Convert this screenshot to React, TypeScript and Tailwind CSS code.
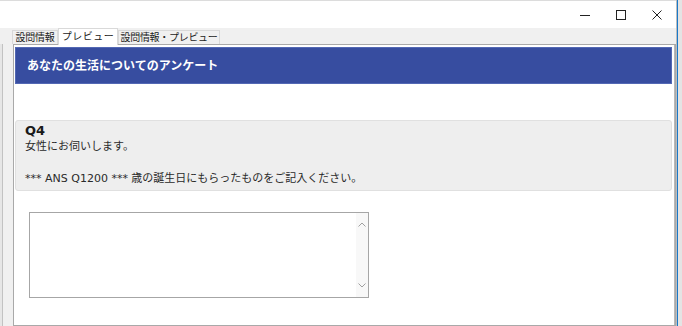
import React from 'react';

const jp = '"DejaVu Sans", "Noto Sans CJK JP", sans-serif';

function WindowControls() {
  return (
    <div className="flex h-full items-center mr-px">
      <div className="w-[36px] h-full flex items-center justify-center">
        <svg width="10" height="10" viewBox="0 0 10 10">
          <path d="M0 5.5 H10" stroke="#222" strokeWidth="1" />
        </svg>
      </div>
      <div className="w-[36px] h-full flex items-center justify-center">
        <svg width="10" height="10" viewBox="0 0 10 10">
          <rect x="0.5" y="0.5" width="9" height="9" fill="none" stroke="#222" strokeWidth="1" />
        </svg>
      </div>
      <div className="w-[36px] h-full flex items-center justify-center">
        <svg width="10" height="10" viewBox="0 0 10 10">
          <path d="M0.5 0.5 L9.5 9.5 M9.5 0.5 L0.5 9.5" stroke="#222" strokeWidth="1" />
        </svg>
      </div>
    </div>
  );
}

const tabs = [
  { name: '設問情報', w: 'w-[46px]', active: false },
  { name: 'プレビュー', w: 'w-[60px]', active: true },
  { name: '設問情報・プレビュー', w: 'w-[102px]', active: false },
];

export default function App() {
  return (
    <div
      className="w-[682px] h-[326px] flex bg-[#f0f0f0] overflow-hidden text-[#222]"
      style={{ fontFamily: jp }}
    >
      {/* Main window */}
      <div className="w-[677px] flex flex-col border-r border-[#bdbdbd]">
        {/* Title bar */}
        <div className="h-[28px] bg-white border-t border-[#dcdcdc] flex justify-end shrink-0">
          <WindowControls />
        </div>

        <div className="flex-1 flex min-h-0">
          {/* Left strip */}
          <div className="w-[12px] flex flex-col">
            <div className="h-[16px]" />
            <div className="flex-1 flex">
              <div className="w-[2px] bg-[#e6e6e6]" />
              <div className="w-px bg-[#c2c2c2]" />
              <div className="flex-1 bg-[#f0f0f0]" />
            </div>
          </div>

          {/* Tab control */}
          <div className="flex-1 flex flex-col min-w-0">
            <div className="h-[16px] flex items-end shrink-0">
              {tabs.map((t) =>
                t.active ? (
                  <div
                    key={t.name}
                    className={`${t.w} h-[17px] -mb-px relative z-10 bg-white border border-b-0 border-[#d9d9d9] flex items-center justify-center text-[10px] tracking-[0.5px] leading-none`}
                  >
                    {t.name}
                  </div>
                ) : (
                  <div
                    key={t.name}
                    className={`${t.w} h-[14px] bg-[#f0f0f0] border border-b-0 border-[#d9d9d9] flex items-center justify-center text-[10px] tracking-[-0.3px] leading-none`}
                  >
                    {t.name}
                  </div>
                )
              )}
            </div>

            {/* Panel */}
            <div className="flex-1 ml-px border border-[#a9a9a9] bg-white min-h-0">
              <div className="h-full border-r border-[#b8b8b8] pl-px pr-[2px] pt-[2px]">
                <div className="h-[37px] bg-[#374da0] border border-[#5368b4] flex items-center pl-[11px]">
                  <span className="text-white font-bold text-[12px]">
                    あなたの生活についてのアンケート
                  </span>
                </div>

                <div className="mt-[36px] h-[71px] bg-[#eeeeee] border border-[#e0e0e0] rounded-[3px] pl-[9px] pt-[2px] text-[11px] leading-[16px] text-[#2a2a2a]">
                  <div className="font-bold text-[13px] leading-[16px] text-[#1a1a1a]">Q4</div>
                  <div>女性にお伺いします。</div>
                  <div className="h-[16px]" />
                  <div>*** ANS Q1200 *** 歳の誕生日にもらったものをご記入ください。</div>
                </div>

                <div className="mt-[21px] ml-[14px] w-[340px] h-[86px] border border-[#a6a6a6] bg-white flex justify-end">
                  <div className="w-[12px] bg-[#f8f8f8] flex flex-col items-center justify-between py-[9px]">
                    <svg width="8" height="5" viewBox="0 0 8 5">
                      <path d="M0.5 4.5 L4 1 L7.5 4.5" fill="none" stroke="#a0a0a0" strokeWidth="1" />
                    </svg>
                    <svg width="8" height="5" viewBox="0 0 8 5">
                      <path d="M0.5 0.5 L4 4 L7.5 0.5" fill="none" stroke="#a0a0a0" strokeWidth="1" />
                    </svg>
                  </div>
                </div>
              </div>
            </div>
          </div>
        </div>
      </div>

      {/* Window edge */}
      <div className="w-px bg-[#1979ca]" />
      <div className="flex-1 bg-[#e4e4e4]" />
    </div>
  );
}
